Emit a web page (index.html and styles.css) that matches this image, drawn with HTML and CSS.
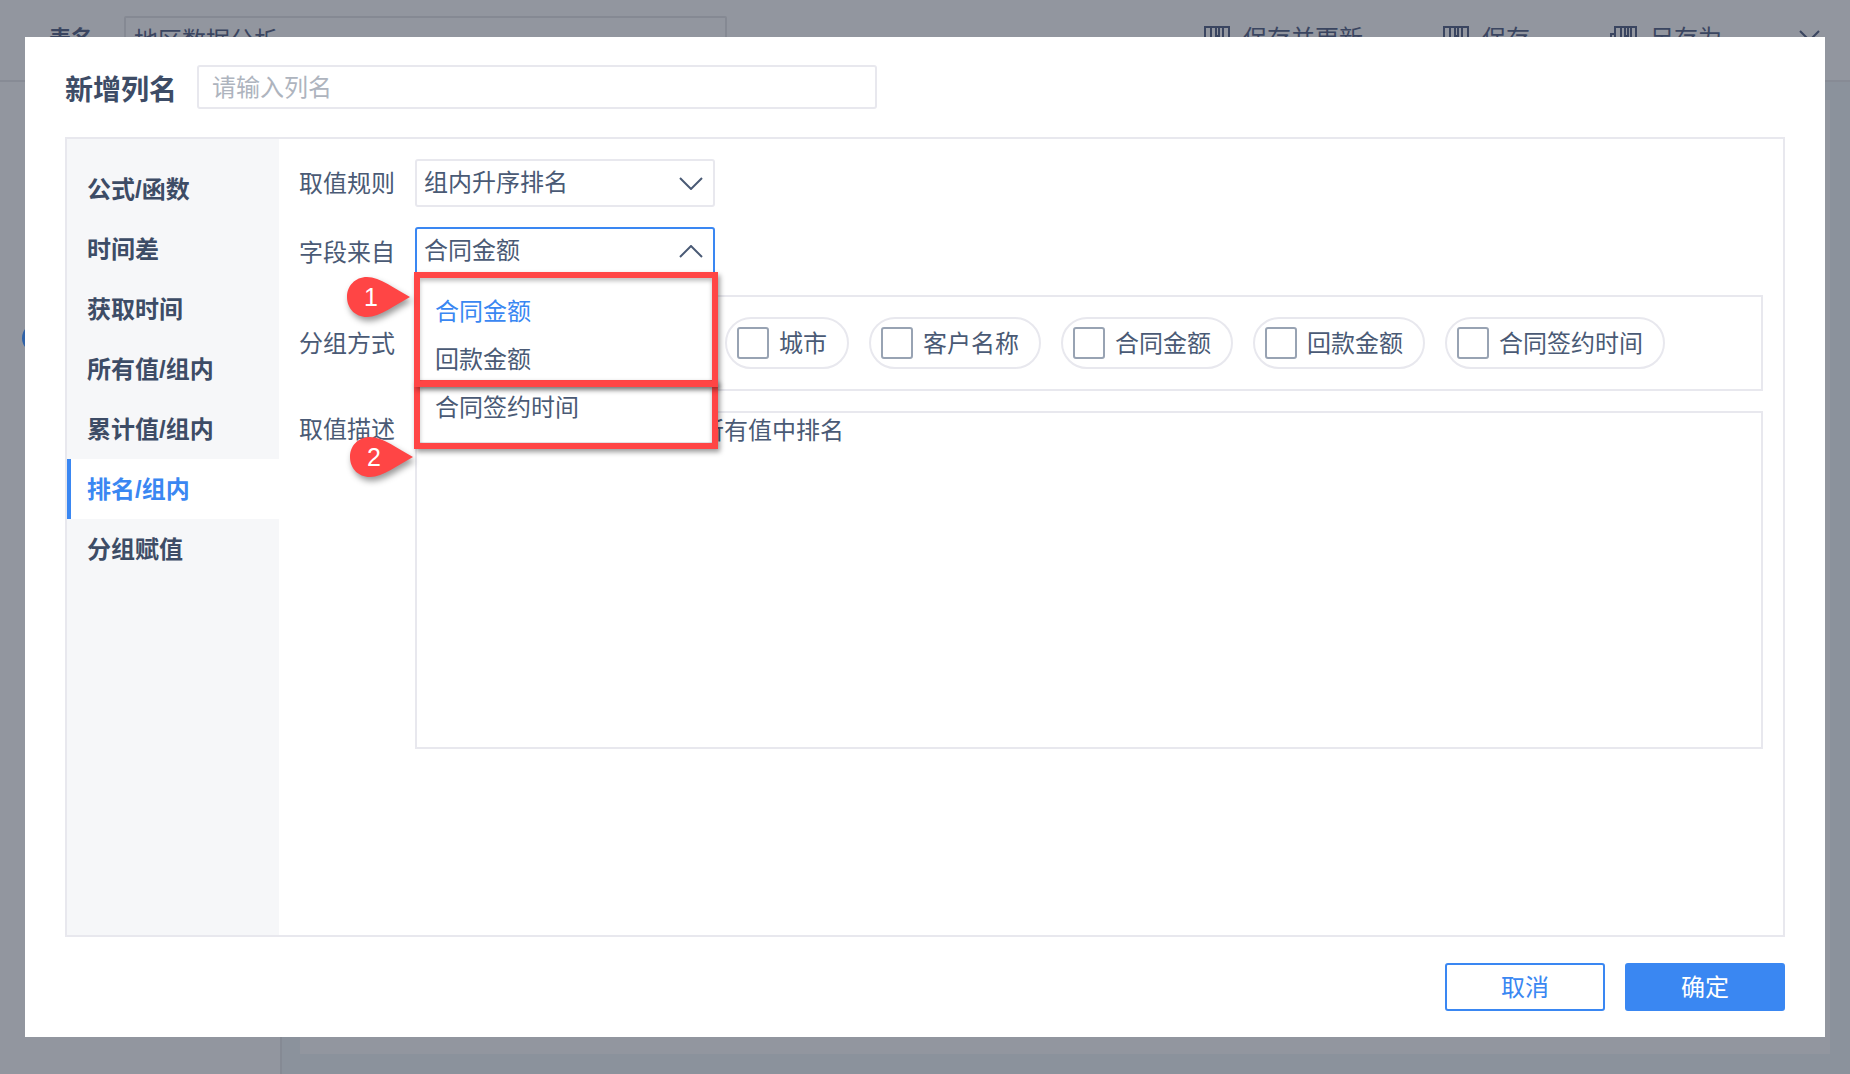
FILE: index.html
```html
<!DOCTYPE html>
<html lang="zh-CN">
<head>
<meta charset="utf-8">
<title>新增列名</title>
<link rel="stylesheet" href="styles.css">
</head>
<body>
<div class="page">
  <header class="topbar">
    <span class="table-label">表名</span>
    <div class="table-name">地区数据分析</div>
    <div class="actions">
      <span class="action">
        <svg class="action-icon" viewBox="0 0 26 26"><path d="M1 25V1h24v24M7 1v24M19 1v24M12 1v9h3V1" fill="none" stroke="currentColor" stroke-width="2"/></svg>
        保存并更新
      </span>
      <span class="action">
        <svg class="action-icon" viewBox="0 0 26 26"><path d="M1 25V1h24v24M7 1v24M19 1v24M12 1v9h3V1" fill="none" stroke="currentColor" stroke-width="2"/></svg>
        保存
      </span>
      <span class="action">
        <svg class="action-icon wide" viewBox="0 0 27 26"><path d="M1 25V8h4M5 25V1h21v24M11 1v24M21 1v24M15 1v9h3V1" fill="none" stroke="currentColor" stroke-width="2"/></svg>
        另存为
      </span>
      <svg class="close-icon" viewBox="0 0 21 21"><path d="M1 1l19 19M20 1L1 20" fill="none" stroke="currentColor" stroke-width="2"/></svg>
    </div>
  </header>
  <div class="workspace">
    <aside class="rail"><span class="rail-dot"></span></aside>
    <main class="stage"><div class="stage-card"></div></main>
  </div>
</div>

<section class="modal">
  <div class="name-row">
    <label class="name-label">新增列名</label>
    <div class="name-input">请输入列名</div>
  </div>

  <div class="panel">
    <nav class="side">
      <div class="side-item">公式/函数</div>
      <div class="side-item">时间差</div>
      <div class="side-item">获取时间</div>
      <div class="side-item">所有值/组内</div>
      <div class="side-item">累计值/组内</div>
      <div class="side-item active">排名/组内</div>
      <div class="side-item">分组赋值</div>
    </nav>
    <div class="form">
      <div class="row">
        <span class="row-label">取值规则</span>
        <div class="select">
          <span class="select-text">组内升序排名</span>
          <svg class="chevron" viewBox="0 0 24 13"><path d="M1 1l11 11L23 1" fill="none" stroke="currentColor" stroke-width="2"/></svg>
        </div>
      </div>
      <div class="row">
        <span class="row-label plain">字段来自</span>
        <div class="select open">
          <span class="select-text">合同金额</span>
          <svg class="chevron" viewBox="0 0 24 13"><path d="M1 12L12 1l11 11" fill="none" stroke="currentColor" stroke-width="2"/></svg>
        </div>
      </div>
      <div class="row group-row">
        <span class="row-label">分组方式</span>
        <div class="chips">
          <span class="chip"><i class="check"></i><span class="chip-text">城市</span></span>
          <span class="chip"><i class="check"></i><span class="chip-text">客户名称</span></span>
          <span class="chip"><i class="check"></i><span class="chip-text">合同金额</span></span>
          <span class="chip"><i class="check"></i><span class="chip-text">回款金额</span></span>
          <span class="chip"><i class="check"></i><span class="chip-text">合同签约时间</span></span>
        </div>
      </div>
      <div class="row desc-row">
        <span class="row-label">取值描述</span>
        <div class="desc">所有值中排名</div>
      </div>
    </div>
  </div>

  <div class="footer">
    <button class="btn ghost">取消</button>
    <button class="btn primary">确定</button>
  </div>

  <div class="dropdown">
    <div class="option selected">合同金额</div>
    <div class="option">回款金额</div>
    <div class="option">合同签约时间</div>
  </div>
  <div class="red-box box-two"></div>
  <div class="red-box box-one"></div>
  <div class="marker marker-one">
    <svg class="marker-shape" viewBox="0 0 63 40"><path d="M20 0C33 0 48 12 63 20C48 28 33 40 20 40C8 40 0 31 0 20C0 9 8 0 20 0Z" fill="#ff4545"/></svg>
    <span class="marker-num">1</span>
  </div>
  <div class="marker marker-two">
    <svg class="marker-shape" viewBox="0 0 63 40"><path d="M20 0C33 0 48 12 63 20C48 28 33 40 20 40C8 40 0 31 0 20C0 9 8 0 20 0Z" fill="#ff4545"/></svg>
    <span class="marker-num">2</span>
  </div>
</section>
</body>
</html>
```

FILE: styles.css
```css
* { box-sizing: border-box; }
html, body { margin: 0; padding: 0; }
body {
  width: 1850px;
  height: 1074px;
  overflow: hidden;
  position: relative;
  background: #92969f;
  font-family: "Liberation Sans", "Noto Sans CJK SC", sans-serif;
  font-size: 24px;
  color: #4a5a75;
}

/* dimmed page behind the dialog */
.page { display: flex; flex-direction: column; height: 1074px; color: #3a4560; }
.topbar {
  height: 82px;
  flex: none;
  display: flex;
  align-items: flex-start;
  padding: 16px 30px 0 49px;
  border-bottom: 2px solid #878b95;
}
.table-label { width: 75px; font-size: 22px; font-weight: 700; line-height: 46px; }
.table-name {
  width: 603px;
  height: 46px;
  padding-left: 8px;
  line-height: 46px;
  border: 2px solid #858993;
  border-radius: 2px;
}
.actions { margin-left: auto; display: flex; align-items: flex-start; gap: 80px; line-height: 46px; }
.action { display: flex; align-items: flex-start; gap: 13px; }
.action-icon { width: 26px; height: 26px; margin-top: 10px; }
.action-icon.wide { width: 27px; }
.close-icon { width: 21px; height: 21px; margin: 14px 0 0 -3px; }
.workspace { flex: 1; display: flex; background: #8b929c; }
.rail { width: 282px; flex: none; background: #92969f; border-right: 2px solid #858a94; position: relative; }
.rail-dot { position: absolute; left: 22px; top: 241px; width: 30px; height: 30px; border-radius: 50%; background: #2f62a8; }
.stage { flex: 1; padding: 18px 20px 20px 18px; }
.stage-card { height: 100%; background: #92969f; }

/* dialog */
.modal {
  position: absolute;
  left: 25px;
  top: 37px;
  width: 1800px;
  height: 1000px;
  background: #fff;
  padding: 28px 40px 0;
  display: flex;
  flex-direction: column;
}
.name-row { display: flex; align-items: center; height: 44px; gap: 20px; }
.name-label { width: 112px; font-size: 28px; font-weight: 700; line-height: 44px; color: #3d4c66; margin-top: 8px; }
.name-input {
  width: 680px;
  height: 44px;
  padding-left: 13px;
  line-height: 42px;
  color: #aeb4be;
  border: 2px solid #e8e8ee;
  border-radius: 3px;
}
.panel { margin-top: 28px; height: 800px; flex: none; display: flex; border: 2px solid #e8e8ee; }
.side { width: 212px; flex: none; background: #f6f7f9; padding-top: 20px; }
.side-item {
  height: 60px;
  padding-left: 20px;
  line-height: 61px;
  font-weight: 700;
  color: #3d4c66;
}
.side-item.active { background: #fff; color: #3a87f2; border-left: 4px solid #3a87f2; padding-left: 16px; }
.form { flex: 1; padding: 20px 20px 0; display: flex; flex-direction: column; gap: 20px; }
.row { display: flex; align-items: center; }
.row-label { width: 116px; flex: none; line-height: 50px; height: 48px; }
.row-label.plain { line-height: 52px; }
.select {
  width: 300px;
  height: 48px;
  padding: 0 10px 0 7px;
  display: flex;
  align-items: center;
  justify-content: space-between;
  border: 2px solid #e8e8ee;
  border-radius: 3px;
}
.select-text { line-height: 44px; height: 44px; }
.select.open { border-color: #3a87f2; }
.chevron { width: 24px; height: 13px; }
.group-row { height: 96px; }
.chips {
  flex: 1;
  height: 96px;
  padding-left: 308px;
  display: flex;
  align-items: center;
  gap: 20px;
  border: 2px solid #e8e8ee;
}
.chip {
  height: 52px;
  padding: 0 20px 0 10px;
  display: flex;
  align-items: center;
  gap: 10px;
  white-space: nowrap;
  border: 2px solid #e8e8ee;
  border-radius: 26px;
}
.chip-text { line-height: 34px; height: 47px; padding-top: 7px; }
.check { width: 32px; height: 32px; flex: none; border: 2px solid #98a3b3; border-radius: 3px; }
.desc-row { align-items: flex-start; }
.desc-row .row-label { line-height: 35px; height: auto; padding-top: 1px; }
.desc {
  flex: 1;
  height: 338px;
  padding: 0 0 0 283px;
  line-height: 36px;
  border: 2px solid #e8e8ee;
}
.footer { margin-top: 26px; display: flex; justify-content: flex-end; gap: 20px; }
.btn {
  width: 160px;
  height: 48px;
  padding: 0 0 4px;
  font: inherit;
  border-radius: 3px;
  border: 2px solid #3a87f2;
}
.btn.ghost { background: #fff; color: #3a87f2; }
.btn.primary { background: #3a87f2; color: #fff; }

/* open select list */
.dropdown {
  position: absolute;
  left: 391px;
  top: 238px;
  width: 300px;
  height: 170px;
  padding-top: 13px;
  background: #fff;
  border-bottom: 3px solid #e4e4e8;
}
.option { height: 48px; line-height: 48px; padding-left: 19px; }
.option.selected { color: #3a87f2; }

/* annotations */
.red-box {
  position: absolute;
  left: 389px;
  width: 304px;
  border: 6px solid #ff4545;
  box-shadow: 2px 3px 5px rgba(0, 0, 0, .4), inset 0 3px 4px rgba(0, 0, 0, .25);
}
.box-one { top: 235px; height: 115px; }
.box-two { top: 343px; height: 69px; }
.marker { position: absolute; width: 63px; height: 40px; }
.marker-one { left: 322px; top: 240px; }
.marker-two { left: 325px; top: 400px; }
.marker-shape { position: absolute; inset: 0; width: 100%; height: 100%; filter: drop-shadow(2px 4px 3px rgba(0, 0, 0, .4)); }
.marker-num {
  position: absolute;
  left: 6px;
  top: 0;
  width: 36px;
  text-align: center;
  font-family: "Liberation Sans", sans-serif;
  font-size: 25px;
  line-height: 40px;
  color: #fff;
}
```
